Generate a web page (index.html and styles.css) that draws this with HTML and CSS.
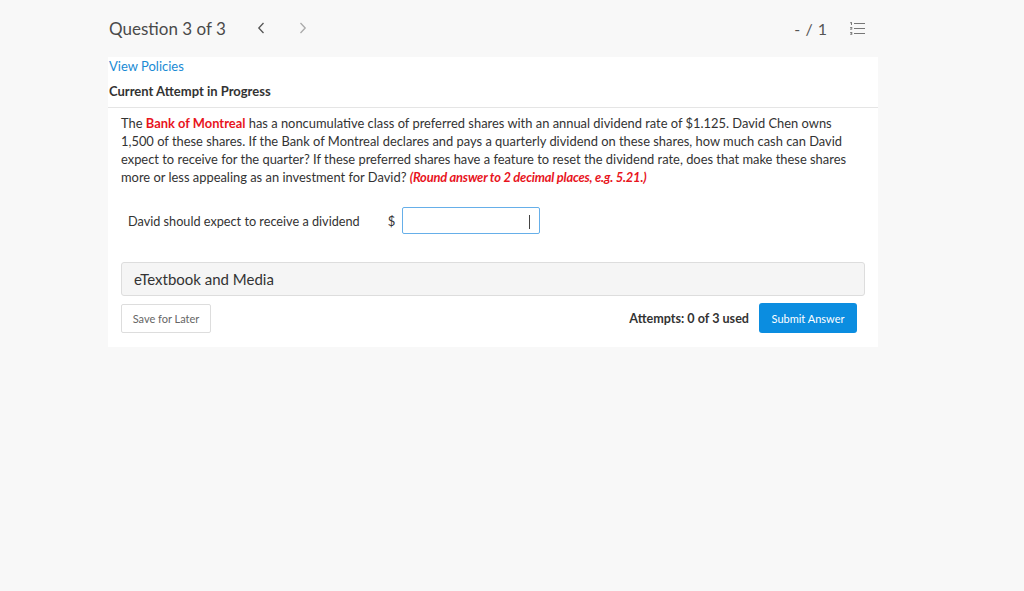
FILE: index.html
```html
<!DOCTYPE html>
<html>
<head>
<meta charset="utf-8">
<link rel="stylesheet" href="styles.css">
</head>
<body>
<div class="page">
  <header class="topbar">
    <div class="qnav">
      <span class="qtitle">Question 3 of 3</span>
      <svg class="chev prev" width="8" height="12" viewBox="0 0 8 12"><path d="M6.5 1 1.8 6l4.7 5" fill="none" stroke="#555" stroke-width="1.3"/></svg>
      <svg class="chev next" width="8" height="12" viewBox="0 0 8 12"><path d="M1.5 1 6.2 6l-4.7 5" fill="none" stroke="#aaa" stroke-width="1.3"/></svg>
    </div>
    <div class="score">
      <span class="pts">- / 1</span>
      <svg class="listicon" width="17" height="14" viewBox="0 0 17 14">
        <g fill="none" stroke="#777" stroke-width="1.2">
          <path d="M5 2.5h11M5 7.5h11M5 12.5h11"/>
        </g>
        <g fill="#777">
          <rect x="1" y="1.3" width="2" height="0.9"/>
          <rect x="2" y="1.3" width="1" height="2.7"/>
          <rect x="1" y="6.2" width="2.2" height="0.9"/>
          <rect x="2.2" y="6.2" width="1" height="1.5"/>
          <rect x="1" y="7.7" width="2.2" height="0.9"/>
          <rect x="1" y="11.2" width="2.2" height="0.9"/>
          <rect x="2.2" y="11.2" width="1" height="2.4"/>
          <rect x="1" y="12.8" width="2.2" height="0.8"/>
        </g>
      </svg>
    </div>
  </header>
  <main class="panel">
    <a class="policies" href="#">View Policies</a>
    <h2 class="attempt">Current Attempt in Progress</h2>
    <div class="question">
      <p class="qtext">The <span class="red-bold">Bank of Montreal</span> has a noncumulative class of preferred shares with an annual dividend rate of $1.125. David Chen owns 1,500 of these shares. If the Bank of Montreal declares and pays a quarterly dividend on these shares, how much cash can David expect to receive for the quarter? If these preferred shares have a feature to reset the dividend rate, does that make these shares more or less appealing as an investment for David? <em class="red-italic">(Round answer to 2 decimal places, e.g. 5.21.)</em></p>
      <div class="answer-row">
        <span class="answer-label">David should expect to receive a dividend</span>
        <span class="dollar">$</span>
        <span class="input"><span class="caret"></span></span>
      </div>
      <div class="etext">eTextbook and Media</div>
      <div class="actions">
        <button class="btn-save">Save for Later</button>
        <div class="submit-group">
          <span class="attempts">Attempts: 0 of 3 used</span>
          <button class="btn-submit">Submit Answer</button>
        </div>
      </div>
    </div>
  </main>
</div>
</body>
</html>
```
FILE: styles.css
```css
* { box-sizing: border-box; }
html, body { margin: 0; padding: 0; }
body {
  background: #f8f8f8;
  font-family: Lato, "Open Sans", sans-serif;
  color: #333;
  width: 1024px;
  height: 591px;
}
.page {
  width: 770px;
  margin-left: 108px;
}
.topbar {
  height: 57px;
  display: flex;
  justify-content: space-between;
  align-items: flex-start;
  padding-top: 17px;
}
.qnav {
  display: flex;
  align-items: center;
  height: 22px;
}
.qtitle {
  font-size: 17px;
  color: #4a4a4a;
  margin-left: 1px;
}
.chev { display: block; }
.prev { margin-left: 31px; }
.next { margin-left: 34px; }
.score {
  display: flex;
  align-items: center;
  height: 22px;
  margin-right: 12px;
}
.pts {
  font-size: 16px;
  color: #555;
  word-spacing: 1px;
}
.listicon { margin-left: 22px; }
.panel {
  background: #fff;
  height: 290px;
}
.policies {
  display: block;
  font-size: 13px;
  color: #1a8ad4;
  text-decoration: none;
  padding-left: 1px;
  line-height: 18px;
}
.attempt {
  margin: 0;
  font-size: 13px;
  font-weight: 700;
  color: #333;
  line-height: 18px;
  padding: 7px 0 7px 1px;
  border-bottom: 1px solid #e5e5e5;
}
.question {
  padding: 6px 13px 0 13px;
}
.qtext {
  margin: 0;
  max-width: 732px;
  font-size: 12.9px;
  line-height: 18px;
  color: #333;
}
.red-bold { color: #e8141d; font-weight: 700; }
.red-italic { color: #e8141d; font-weight: 700; font-style: italic; letter-spacing: -0.2px; }
.answer-row {
  display: flex;
  align-items: center;
  margin-top: 21px;
  padding-left: 7px;
  height: 27px;
}
.answer-label {
  font-size: 12.7px;
  color: #333;
}
.dollar {
  font-size: 13px;
  margin-left: 28px;
  color: #333;
}
.input {
  margin-left: 7px;
  width: 138px;
  height: 27px;
  border: 1px solid #66afe9;
  border-radius: 2px;
  position: relative;
  display: block;
}
.caret {
  position: absolute;
  right: 9px;
  top: 7px;
  width: 1px;
  height: 14px;
  background: #444;
}
.etext {
  margin-top: 28px;
  height: 34px;
  background: #f5f5f5;
  border: 1px solid #ddd;
  border-radius: 3px;
  font-size: 15px;
  color: #333;
  padding-left: 12px;
  display: flex;
  align-items: center;
}
.actions {
  display: flex;
  justify-content: space-between;
  align-items: center;
  margin-top: 7px;
  padding-right: 8px;
}
.btn-save {
  font-family: Lato, sans-serif;
  width: 90px;
  height: 29px;
  background: #fff;
  border: 1px solid #ddd;
  border-radius: 2px;
  font-size: 11px;
  color: #666;
  padding: 0;
}
.submit-group {
  display: flex;
  align-items: center;
}
.attempts {
  font-size: 12.6px;
  font-weight: 700;
  color: #333;
}
.btn-submit {
  font-family: Lato, sans-serif;
  margin-left: 10px;
  width: 98px;
  height: 30px;
  background: #0b8de0;
  border: none;
  border-radius: 3px;
  color: #fff;
  font-size: 11px;
  padding: 0;
}
```
